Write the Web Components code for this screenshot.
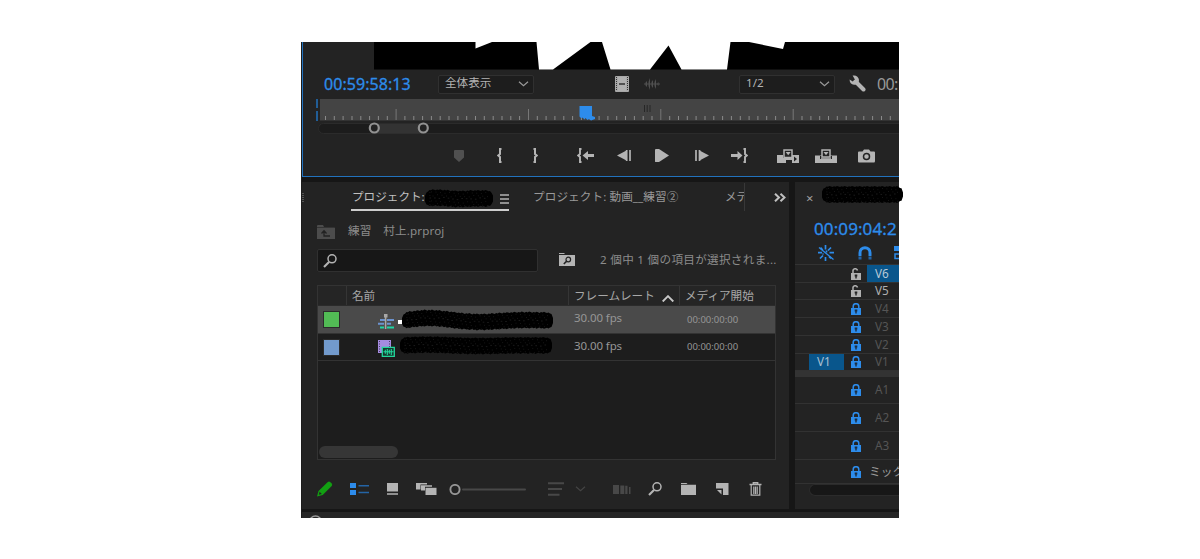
<!DOCTYPE html>
<html lang="ja">
<head>
<meta charset="utf-8">
<title>Editor</title>
<style>
  body {
    margin: 0;
    background: #fff;
    font-family: "Noto Sans", "Noto Sans CJK JP", sans-serif;
  }
</style>
</head>
<body>
<editor-window></editor-window>

<script>
// name: [width, height, markup]
const icons = {
  film: [14, 16, `<rect width="14" height="16" rx="1" fill="#a8a8a8"/><path d="M1.500 1v14M12.500 1v14" stroke="#333" stroke-width="1" stroke-dasharray="1 1"/><path d="M3 1h8v14H3z" fill="#b0b0b0"/><path d="M4 8h6" stroke="#333" stroke-width="1.500"/>`],
  wave: [16, 12, `<path d="M0 6h16" stroke="currentColor"/><path d="M1.500 4.500L3 3v6L1.500 7.500zM4.500 4L6 0v12L4.500 8zM7.500 4L9 2v8L7.500 8zM10.500 4L12 1v10l-1.500-3zM13.500 5l1-1v4l-1-1z" fill="currentColor"/>`],
  wrench: [17, 17, `<path d="M6.500 6.500l8 8" stroke="currentColor" stroke-width="4" stroke-linecap="round"/><path d="M3.600.600C6.500-.200 9.800 1.500 10 5c0 3-2.200 5-5 4.700C2.200 9.500.500 7.500.600 4.500L3.800 6.400 6 4.800z" fill="currentColor"/>`],
  marker: [10, 12, `<path d="M0 1q0-1 1-1h8q1 0 1 1v6.500L5 12 0 7.500z" fill="currentColor"/>`],
  markIn: [5, 15, `<path d="M4.500 1H3v5L1.200 7.500 3 9v5h1.500" fill="none" stroke="currentColor" stroke-width="2"/>`],
  markOut: [5, 15, `<path d="M.500 1H2v5l1.800 1.500L2 9v5H.500" fill="none" stroke="currentColor" stroke-width="2"/>`],
  goIn: [17, 15, `<path d="M4.500 1H3v5L1.200 7.500 3 9v5h1.500" fill="none" stroke="currentColor" stroke-width="1.900"/><path d="M5.500 7.500L11 3v3h6v3h-6v3z" fill="currentColor"/>`],
  goOut: [17, 15, `<path d="M12.500 1H14v5l1.800 1.500L14 9v5h-1.500" fill="none" stroke="currentColor" stroke-width="1.900"/><path d="M11.500 7.500L6.500 3v3H0v3h6.500v3z" fill="currentColor"/>`],
  stepBack: [14, 11, `<path d="M0 5.500L9 .700v9.600z" fill="currentColor"/><path d="M9.700 0v11M13 0v11" stroke="currentColor" stroke-width="1.700"/>`],
  play: [14, 13, `<path d="M0 .500Q0 0 1 0h3l10 6.500L4 13H1q-1 0-1-.500z" fill="currentColor"/>`],
  stepFwd: [14, 11, `<path d="M14 5.500L5 .700v9.600z" fill="currentColor"/><path d="M1 0v11M4.500 0v11" stroke="currentColor" stroke-width="1.700"/>`],
  insert: [22, 14, `<path d="M0 6h6v3h9V6h7v8h-7v-3H9v3H0z" fill="currentColor"/><path d="M7 1h8v7.500H7z" fill="#232323" stroke="currentColor" stroke-width="1.500"/><path d="M8.700 3h5L11.200 6.300z" fill="currentColor"/><path d="M17 7.500v5l3-2.500z" fill="#232323"/>`],
  overwrite: [22, 14, `<path d="M0 6.500h22V14H0z" fill="currentColor"/><path d="M5 8.500h12" stroke="#232323" stroke-width="3"/><path d="M6 9.300h10" stroke="currentColor" stroke-width="1"/><path d="M7 1h8v7H7z" fill="#232323" stroke="currentColor" stroke-width="1.500"/><path d="M8.500 3h5L11 6.300z" fill="currentColor"/>`],
  camera: [17, 14, `<path d="M1 2.500h3.500L6 .500h5l1.500 2H16q1 0 1 1V12q0 1.500-1 1.500H1q-1 0-1-1V3.500q0-1 1-1z" fill="currentColor"/><circle cx="8.500" cy="7.500" r="3" fill="none" stroke="#232323" stroke-width="1.500"/>`],
  menu: [9, 10, `<path d="M0 1h9M0 5h9M0 9h9" stroke="currentColor" stroke-width="1.500"/>`],
  more: [12, 9, `<path d="M1 .700l4 3.800-4 3.800M6.500.700l4 3.800-4 3.800" fill="none" stroke="currentColor" stroke-width="2"/>`],
  grip: [3, 9, `<path d="M1 0v9" stroke="currentColor" stroke-width="1.500" stroke-dasharray="1 1"/>`],
  binUp: [18, 14, `<path d="M0 1q0-1 1-1h5l1 2h10q1 0 1 1v11H0z" fill="currentColor"/><path d="M0 2.500h18" stroke="#232323" stroke-width=".600"/><path d="M7 6.500v4.500h6M4.500 8.500L7 5.800l2.500 2.700" fill="none" stroke="#222" stroke-width="1.300"/>`],
  search: [14, 14, `<circle cx="9" cy="4.800" r="4" fill="none" stroke="currentColor" stroke-width="1.500"/><path d="M6 8L1 13" stroke="currentColor" stroke-width="2.200"/>`],
  binSearch: [16, 13, `<path d="M0 0h5.500v1H0zM0 2h16v11H0z" fill="currentColor"/><circle cx="9.300" cy="6.500" r="2.300" fill="none" stroke="#222" stroke-width="1.200"/><path d="M7.700 8.200L4.800 11" stroke="#222" stroke-width="1.600"/>`],
  sortUp: [12, 7, `<path d="M.700 6.500L6 1.200l5.300 5.300" fill="none" stroke="currentColor" stroke-width="1.900"/>`],
  down: [11, 6, `<path d="M1 .700l4.500 4L10 .700" fill="none" stroke="currentColor" stroke-width="1.200"/>`],
  sequence: [16, 15, `<path d="M2 6h5M9 6h7M0 9.800h6M9 9.800h4" stroke="#6c93cf" stroke-width="2"/><path d="M2 13.500h4M9 13.500h7" stroke="#1fd6a4" stroke-width="2"/><path d="M7.600 1v14" stroke="#a8a8a8" stroke-width="1.600"/><path d="M6 0h3.500v3.500H6z" fill="#a8a8a8"/>`],
  clip: [17, 17, `<path d="M0 0h13v13H0z" fill="#a58be0"/><path d="M1.500 1v12M11.500 1v6" stroke="#453a60" stroke-dasharray="1 1.500"/><path d="M4.300 7.300h12v9h-12z" fill="#16382f" stroke="#22d79b" stroke-width="1.300"/><path d="M5.500 11.800h10M7.300 9.800v4M9.300 9v6M11.300 9.800v4M13.300 9v6" stroke="#22d79b" stroke-width="1.100"/>`],
  pencil: [16, 16, `<path d="M0 15.500l1.500-5.500L10.800 1q1.200-1 2.300 0L14.700 2.600q1 1.200 0 2.300L5.700 14z" fill="#12a012"/><path d="M1.800 13.700l.800-3 2.200 2.200z" fill="#232323"/>`],
  list: [19, 12, `<path d="M0 0h6v5H0zM0 7h6v5H0z" fill="#2d8ceb"/><path d="M8.500 2.700H19M8.500 9.500H19" stroke="#2464a5" stroke-width="1.600"/>`],
  thumbs: [13, 12, `<path d="M1 0h11v8.500H1zM1 10.200h11v1.600H1z" fill="currentColor"/>`],
  freeform: [21, 12, `<path d="M0 0h11v1.500H4.500V6.500H0zM5 2.300h11v1.500H9V7.500H5z" fill="currentColor"/><path d="M9.500 4.800H20.500V12H9.500z" fill="currentColor"/>`],
  slider: [77, 11, `<path d="M14 5.500h62" stroke="#484848" stroke-width="2" stroke-linecap="round"/><circle cx="6" cy="5.500" r="4.600" fill="none" stroke="#969696" stroke-width="1.900"/>`],
  sort: [16, 14, `<path d="M0 1.300h16M0 7h14M0 12.700h11.500" stroke="currentColor" stroke-width="1.900"/>`],
  automate: [18, 9, `<path d="M0 0h6v9H0zM7.300.500h4V9h-4zM12.200.800h2.300V9h-2.300zM16 2h1.500v7H16z" fill="currentColor"/>`],
  bin: [16, 12, `<path d="M0 0h5.500l1 1H0zM0 1.800h15V12H0z" fill="currentColor"/>`],
  newItem: [13, 12, `<path d="M0 0h12.500v12H7V5.500H0z" fill="currentColor"/><path d="M1 7h4.500v4.500z" fill="currentColor"/>`],
  trash: [13, 14, `<path d="M.500 2.500h12M4.300 2.500V.800h4.400v1.700" stroke="currentColor" fill="none" stroke-width="1.400"/><path d="M2.200 3v10.200h8.600V3M4.800 4.500v7.500M6.500 4.500v7.500M8.200 4.500v7.500" stroke="currentColor" fill="none" stroke-width="1.200"/>`],
  lock: [10, 12, `<path d="M2.200 6V3.500a2.800 2.800 0 0 1 5.600 0V6" fill="none" stroke="currentColor" stroke-width="1.500"/><path d="M0 5h10v7H0z" fill="currentColor"/><path d="M4.300 7h1.400v3.500H4.300zM3.700 6.600h2.600v1.800H3.700z" fill="#1a2c40"/>`],
  unlock: [10, 12, `<path d="M2 6V3.500a2.300 2.300 0 0 1 4.500-1" fill="none" stroke="currentColor" stroke-width="1.500"/><path d="M0 5h10v7H0z" fill="currentColor"/><path d="M4.300 7h1.400v3.500H4.300zM3.700 6.600h2.600v1.800H3.700z" fill="#222"/>`],
  nest: [16, 16, `<path d="M7.500 0v4.500M7.500 12v4M0 7.700h4M11.500 7.700H16M11 11.500l2 2M4.800 5L2.500 2.700M10 5.500l3-3M5 10.500l-3 3M8.500 5.500v2M5 8.500v1" stroke="currentColor" fill="none" stroke-width="1.700"/><path d="M1 2.500l14.500 12" stroke="currentColor" stroke-width="1.300"/>`],
  magnet: [14, 14, `<path d="M2 10V6.700a5 5 0 0 1 10 0V10" fill="none" stroke="currentColor" stroke-width="3"/><path d="M.500 10.500h3v3h-3zM10.500 10.500h3v3h-3z" fill="#2464a5"/>`],
  linked: [9, 14, `<path d="M0 0h9v5H0z" fill="currentColor"/><path d="M6 8H1v4.500h5" fill="none" stroke="currentColor" stroke-width="1.500"/>`]
};

class UiIcon extends HTMLElement {
  constructor() {
    super();
    this.attachShadow({mode: 'open'});
  }

  connectedCallback() {
    const [w, h, body] = icons[this.getAttribute('name')];
    this.shadowRoot.innerHTML = `<style>
      :host { display: block; flex: none; width: ${w}px; height: ${h}px; }
      svg { display: block; }
    </style>
    <svg width="${w}" height="${h}" viewBox="0 0 ${w} ${h}">${body}</svg>`;
  }
}
customElements.define('ui-icon', UiIcon);


class UiSelect extends HTMLElement {
  constructor() {
    super();
    this.attachShadow({mode: 'open'}).innerHTML = `<style>
      :host {
        display: flex; align-items: center; justify-content: space-between;
        flex: none; box-sizing: border-box; width: 96px; height: 19px;
        padding: 0 4px 0 6px;
        background: #1d1d1d; border: 1px solid #303030; border-radius: 2px;
        color: #b4b4b4; font-size: 11.6px; line-height: 16px; white-space: nowrap;
      }
      span { padding-bottom: 2px; }
      ui-icon { color: #999; }
    </style>
    <span><slot></slot></span><ui-icon name="down"></ui-icon>`;
  }
}
customElements.define('ui-select', UiSelect);


// black marker stroke painted over a name
class InkStroke extends HTMLElement {
  constructor() {
    super();
    this.attachShadow({mode: 'open'});
  }

  connectedCallback() {
    const w = +this.getAttribute('width');
    const h = +this.getAttribute('height');
    const bend = +(this.getAttribute('bend') || 0);
    const steps = Math.round(w / 1.5);
    const mid = t => h / 2 + bend * Math.sin(t * 9 + 3) * (1 - t);

    // ragged outline: every few pixels the edge jumps in or out a little
    const edge = side => {
      const pts = [];
      for (let i = 0; i <= steps; i++) {
        const t = i / steps;
        const near = Math.min(i, steps - i) * 1.5;
        const round = near < 6 ? Math.sqrt(1 - (1 - near / 6) ** 2) : 1;
        const jag = (i * 7 % 5) * .28;
        pts.push(`${(t * w).toFixed(1)},${(mid(t) + side * ((h / 2 - 1) * (.35 + .65 * round) - jag)).toFixed(1)}`);
      }
      return pts;
    };
    const outline = edge(-1).concat(edge(1).reverse()).join(' ');

    let specks = '';
    [-6, -3, -.5, 3, 6].forEach((dy, row) => {
      for (let i = 3; i < steps - 3; i += 1 + (i * 5 + row) % 3) {
        const t = i / steps;
        const y = mid(t) + dy + (i * 3 % 4) * .4;
        specks += `M${(t * w).toFixed(1)} ${y.toFixed(1)}h${row === 2 ? 1.6 : .8}`;
      }
    });
    this.shadowRoot.innerHTML = `<style>
      :host { display: block; position: absolute; z-index: 2; width: ${w}px; height: ${h}px; }
      svg { display: block; overflow: visible; }
    </style>
    <svg width="${w}" height="${h}">
      <polygon points="${outline}" fill="#000"/>
      <path d="${specks}" stroke="#2e2e2e" stroke-width=".6"/>
    </svg>`;
  }
}
customElements.define('ink-stroke', InkStroke);


class TimeRuler extends HTMLElement {
  constructor() {
    super();
    this.attachShadow({mode: 'open'});
  }

  connectedCallback() {
    let ticks = '';
    for (let i = 0; i < 65; i++) {
      const x = 22.5 + i * 8.825;
      const major = i % 15 === 8;
      ticks += `<path d="M${x.toFixed(1)} ${major ? 11 : 18}V22" stroke="${major ? '#777' : '#8a8a8a'}"/>`;
    }
    this.shadowRoot.innerHTML = `<style>
      :host { display: block; height: 36px; }
      svg { display: block; }
    </style>
    <svg width="596" height="36">
      <path d="M17 1h579v22H17z" fill="#444"/>
      <path d="M17 22.500h579" stroke="#333"/>
      <path d="M14 1v9M14 13v10" stroke="#2272bd" stroke-width="1.500"/>
      ${ticks}
      <path d="M341.500 7v7M344.200 7v7M347 7v7" stroke="#262626"/>
      <path d="M276.500 8h12.500v10l3 1v2l-4 1.500-2-1.500-1.500 1-2-2-1 1.500-2-2-1 1-2-2z" fill="#2d8ceb"/>
      <rect x="15.500" y="25.500" width="600" height="10" rx="5" fill="#1c1c1c" stroke="#2b2b2b"/>
      <path d="M72 26h49v9.500H72z" fill="#333"/>
      <circle cx="71.300" cy="30" r="4.500" fill="#222" stroke="#929292" stroke-width="2.200"/>
      <circle cx="120.300" cy="30" r="4.500" fill="#222" stroke="#929292" stroke-width="2.200"/>
    </svg>`;
  }
}
customElements.define('time-ruler', TimeRuler);


class ProgramMonitor extends HTMLElement {
  constructor() {
    super();
    this.attachShadow({mode: 'open'}).innerHTML = `<style>
      :host {
        display: block; box-sizing: border-box; height: 135px; overflow: hidden;
        background: #232323; border-left: 1px solid #2272bd; border-bottom: 1px solid #2272bd;
        color: #b4b4b4;
      }
      .video { display: block; height: 28px; margin-left: 71px; }
      .controls, .transport { display: flex; align-items: center; }
      .controls { height: 28px; }
      .transport { height: 43px; }
      .time { flex: none; width: 88px; margin-left: 21px; font-size: 16px; line-height: 28px; letter-spacing: .05px; -webkit-text-stroke: .3px; color: #2d8ceb; }
      .total { flex: none; margin-left: 11px; font-size: 16px; line-height: 28px; letter-spacing: -.6px; color: #999; }
    </style>
    <svg class="video" width="525" height="28">
      <path d="M0 0h525v27.500H0z" fill="#000"/>
      <path d="M101.500 0v6.500L118 0zM162.500 0l2.500 27.500h14L216.500 0zM228 0l8.500 27.500H276L294.500 3.500l13 24h45.500L356.500 0zM375 0l34 7 2-7z" fill="#fff"/>
    </svg>
    <div class="controls">
      <span class="time">00:59:58:13</span>
      <ui-select style="margin-left:26px">全体表示</ui-select>
      <ui-icon name="film" style="margin-left:81px;margin-top:-1px"></ui-icon>
      <ui-icon name="wave" style="margin-left:15px;color:#505050"></ui-icon>
      <ui-select style="margin-left:79px">1/2</ui-select>
      <ui-icon name="wrench" style="margin-left:14px;margin-top:-2px"></ui-icon>
      <span class="total">00:</span>
    </div>
    <time-ruler></time-ruler>
    <div class="transport">
      <ui-icon name="marker" style="margin-left:151px;color:#505050"></ui-icon>
      <ui-icon name="markIn" style="margin-left:33px"></ui-icon>
      <ui-icon name="markOut" style="margin-left:31px"></ui-icon>
      <ui-icon name="goIn" style="margin-left:39px"></ui-icon>
      <ui-icon name="stepBack" style="margin-left:23px"></ui-icon>
      <ui-icon name="play" style="margin-left:24px"></ui-icon>
      <ui-icon name="stepFwd" style="margin-left:26px"></ui-icon>
      <ui-icon name="goOut" style="margin-left:22px"></ui-icon>
      <ui-icon name="insert" style="margin-left:29px"></ui-icon>
      <ui-icon name="overwrite" style="margin-left:16px"></ui-icon>
      <ui-icon name="camera" style="margin-left:21px"></ui-icon>
    </div>`;
  }
}
customElements.define('program-monitor', ProgramMonitor);


class BinItem extends HTMLElement {
  constructor() {
    super();
    this.attachShadow({mode: 'open'}).innerHTML = `<style>
      :host {
        display: grid; grid-template-columns: 29px 222px 111px 1fr; align-items: center;
        box-sizing: border-box; height: 27px; border-bottom: 1px solid #333;
        color: #969696; font-size: 11.5px; line-height: 16px;
      }
      :host([selected]) { background: #4a4a4a; }
      .label { width: 15px; height: 15px; margin-left: 5px; background: var(--label); border: 1px solid #2b2b2b; }
      .name { position: relative; display: flex; align-items: center; height: 26px; padding: 3px 0 0 31px; box-sizing: border-box; }
      .rate { padding: 0 0 3px 5px; letter-spacing: -.1px; }
      .start { padding-left: 7px; font-size: 9.5px; }
    </style>
    <div class="label"></div>
    <div class="name"><slot name="name"></slot></div>
    <div class="rate"><slot name="rate"></slot></div>
    <div class="start"><slot name="start"></slot></div>`;
  }
}
customElements.define('bin-item', BinItem);


class ProjectPanel extends HTMLElement {
  constructor() {
    super();
    this.attachShadow({mode: 'open'}).innerHTML = `<style>
      :host {
        display: block; flex: none; width: 487px; height: 327px;
        background: #232323; color: #999; font-size: 11.6px; line-height: 18px; white-space: nowrap;
      }
      .tabs, .path, .find, .tools, .head { display: flex; align-items: center; }
      .tabs { height: 30px; }
      .tab { position: relative; box-sizing: border-box; flex: none; height: 28px; padding-top: 5px; }
      .current { display: flex; align-items: flex-start; justify-content: space-between; width: 158px; margin-left: 46px; color: #c0c0c0; border-bottom: 2px solid #cdcdcd; }
      .current ui-icon { margin-top: 6px; color: #b4b4b4; }
      .cut { width: 20px; margin-left: 43px; overflow: hidden; border-right: 1px solid #383838; }
      .path { height: 36px; padding-left: 15px; }
      .path span { margin: 1px 0 0 13px; letter-spacing: .15px; color: #8c8c8c; }
      .find { height: 24px; margin-left: 15px; }
      .box { box-sizing: border-box; width: 221px; height: 23px; padding: 4px 5px; background: #171717; border: 1px solid #303030; border-radius: 2px; }
      .table { box-sizing: border-box; width: 459px; height: 175px; margin: 13px 0 0 15px; background: #1d1d1d; border: 1px solid #333; display: flex; flex-direction: column; }
      .head { flex: none; box-sizing: border-box; height: 20px; background: #252525; border-bottom: 1px solid #2b2b2b; color: #a8a8a8; }
      .head div { box-sizing: border-box; height: 19px; display: flex; align-items: center; padding-left: 5px; border-right: 1px solid #353535; }
      .thumb { width: 79px; height: 12px; margin: auto 0 1px 1px; border-radius: 6px; background: #363636; }
      .tools { height: 30px; margin-top: 14px; padding-left: 15px; }
      .tools, .find { color: #b4b4b4; }
    </style>
    <div class="tabs">
      <ui-icon name="grip" style="color:#666"></ui-icon>
      <div class="tab current">
        <span style="padding-left:1px">プロジェクト:</span>
        <ink-stroke width="68" height="19" bend="1" style="left:74px;top:6px"></ink-stroke>
        <ui-icon name="menu"></ui-icon>
      </div>
      <div class="tab" style="width:149px;margin-left:24px;letter-spacing:.1px">プロジェクト: 動画__練習②</div>
      <div class="tab cut">メデ</div>
      <ui-icon name="more" style="margin-left:29px;color:#c0c0c0"></ui-icon>
    </div>
    <div class="path">
      <ui-icon name="binUp" style="color:#4c4c4c;margin-top:4px"></ui-icon>
      <span>練習　村上.prproj</span>
    </div>
    <div class="find">
      <div class="box"><ui-icon name="search"></ui-icon></div>
      <ui-icon name="binSearch" style="margin-left:21px;margin-top:-1px"></ui-icon>
      <span style="margin-left:25px;color:#8c8c8c;letter-spacing:.3px">2 個中 1 個の項目が選択されま...</span>
    </div>
    <div class="table">
      <div class="head">
        <div style="width:29px"></div>
        <div style="width:222px">名前</div>
        <div style="width:111px;justify-content:space-between;padding-right:5px">フレームレート<ui-icon name="sortUp" style="margin-top:6px;color:#c8c8c8"></ui-icon></div>
        <div style="border:0">メディア開始</div>
      </div>
      <slot></slot>
      <div class="thumb"></div>
    </div>
    <div class="tools">
      <ui-icon name="pencil"></ui-icon>
      <ui-icon name="list" style="margin-left:17px"></ui-icon>
      <ui-icon name="thumbs" style="margin-left:17px"></ui-icon>
      <ui-icon name="freeform" style="margin-left:17px"></ui-icon>
      <ui-icon name="slider" style="margin-left:12px"></ui-icon>
      <ui-icon name="sort" style="margin-left:22px;color:#484848"></ui-icon>
      <ui-icon name="down" style="margin-left:11px;color:#444"></ui-icon>
      <ui-icon name="automate" style="margin-left:27px;color:#484848"></ui-icon>
      <ui-icon name="search" style="margin-left:17px"></ui-icon>
      <ui-icon name="bin" style="margin-left:19px"></ui-icon>
      <ui-icon name="newItem" style="margin-left:19px"></ui-icon>
      <ui-icon name="trash" style="margin-left:20px"></ui-icon>
    </div>`;
  }
}
customElements.define('project-panel', ProjectPanel);


class TrackHeader extends HTMLElement {
  constructor() {
    super();
    this.attachShadow({mode: 'open'});
  }

  connectedCallback() {
    this.shadowRoot.innerHTML = `<style>
      :host {
        display: flex; align-items: center; box-sizing: border-box; flex: none;
        overflow: hidden; border-bottom: 1px solid #323232;
        color: #555; font-size: 11.7px; line-height: 14px; white-space: nowrap;
      }
      .patch, .name { box-sizing: border-box; align-self: stretch; display: flex; align-items: center; padding: 0 0 2px 8px; }
      .patch { flex: none; width: 35px; margin: 0 7px 0 14px; }
      :host([patched]) .patch { background: #09568c; color: #a9c0d2; }
      .name { flex: none; width: 40px; margin-left: 6px; }
      :host([open]) .name { color: #b0b0b0; }
      :host([target]) .name { background: #09568c; color: #b9c9d6; }
      :host([mix]) .name { color: #999; padding-left: 2px; }
      ui-icon { color: #2d8ceb; }
      :host([open]) ui-icon { color: #b0b0b0; }
    </style>
    <div class="patch"><slot name="patch"></slot></div>
    <ui-icon name="${this.hasAttribute('open') ? 'unlock' : 'lock'}"></ui-icon>
    <div class="name"><slot></slot></div>`;
  }
}
customElements.define('track-header', TrackHeader);


class TimelinePanel extends HTMLElement {
  constructor() {
    super();
    this.attachShadow({mode: 'open'}).innerHTML = `<style>
      :host { display: block; flex: none; width: 104px; height: 327px; background: #232323; color: #2d8ceb; }
      .tab { position: relative; height: 34px; padding: 7px 0 0 11px; box-sizing: border-box; color: #a0a0a0; font-size: 13px; line-height: 18px; }
      .clip { overflow: hidden; }
      .time { height: 27px; padding-left: 19px; font-size: 17px; line-height: 26px; -webkit-text-stroke: .3px; letter-spacing: .1px; white-space: nowrap; }
      .tools { display: flex; align-items: center; height: 20px; padding-left: 23px; }
      .gap { height: 6px; background: #333; }
      .scroll { height: 10px; margin-left: 14px; background: #171717; border: 1px solid #2b2b2b; border-right: 0; border-radius: 6px 0 0 6px; }
    </style>
    <div class="tab">×<ink-stroke width="81" height="19" style="left:27px;top:3px"></ink-stroke></div>
    <div class="clip">
      <div class="time">00:09:04:2</div>
      <div class="tools">
        <ui-icon name="nest"></ui-icon>
        <ui-icon name="magnet" style="margin-left:24px"></ui-icon>
        <ui-icon name="linked" style="margin-left:22px"></ui-icon>
      </div>
      <div style="height:1px;border-bottom:1px solid #333"></div>
      <slot name="video"></slot>
      <div class="gap"></div>
      <slot name="audio"></slot>
      <div class="scroll"></div>
    </div>`;
  }
}
customElements.define('timeline-panel', TimelinePanel);


class EditorWindow extends HTMLElement {
  constructor() {
    super();
    this.attachShadow({mode: 'open'}).innerHTML = `<style>
      :host {
        display: block; box-sizing: border-box; width: 598px; height: 476px; margin: 42px 0 0 301px;
        background: #161616; border-left: 1px solid #1c1c1c;
      }
      .lower { display: flex; gap: 6px; padding-top: 5px; height: 327px; }
      .next { height: 6px; margin-top: 3px; background: #262626; overflow: hidden; }
      .next svg { display: block; margin-left: 6px; }
    </style>
    <program-monitor></program-monitor>
    <div class="lower">
      <project-panel>
        <bin-item selected style="--label:#52bb55;height:28px">
          <ui-icon slot="name" name="sequence"></ui-icon>
          <span slot="name" style="width:6px;height:4px;margin:1px 0 0 4px;background:#fff"></span>
          <ink-stroke slot="name" width="151" height="19" bend="3" style="left:55px;top:4px"></ink-stroke>
          <span slot="rate">30.00 fps</span>
          <span slot="start">00:00:00:00</span>
        </bin-item>
        <bin-item style="--label:#729acc">
          <ui-icon slot="name" name="clip"></ui-icon>
          <ink-stroke slot="name" width="152" height="19" bend="1" style="left:53px;top:2px"></ink-stroke>
          <span slot="rate">30.00 fps</span>
          <span slot="start">00:00:00:00</span>
        </bin-item>
      </project-panel>
      <timeline-panel>
        <track-header slot="video" open target style="height:18px">V6</track-header>
        <track-header slot="video" open style="height:17px">V5</track-header>
        <track-header slot="video" style="height:18px">V4</track-header>
        <track-header slot="video" style="height:18px">V3</track-header>
        <track-header slot="video" style="height:18px">V2</track-header>
        <track-header slot="video" patched style="height:17px"><span slot="patch">V1</span>V1</track-header>
        <track-header slot="audio" style="height:27px">A1</track-header>
        <track-header slot="audio" style="height:28px">A2</track-header>
        <track-header slot="audio" style="height:28px">A3</track-header>
        <track-header slot="audio" mix style="height:24px">ミック</track-header>
      </timeline-panel>
    </div>
    <div class="next"><svg width="16" height="8"><circle cx="7.500" cy="10" r="6" fill="none" stroke="#999" stroke-width="1.500"/></svg></div>`;
  }
}
customElements.define('editor-window', EditorWindow);
</script>
</body>
</html>
